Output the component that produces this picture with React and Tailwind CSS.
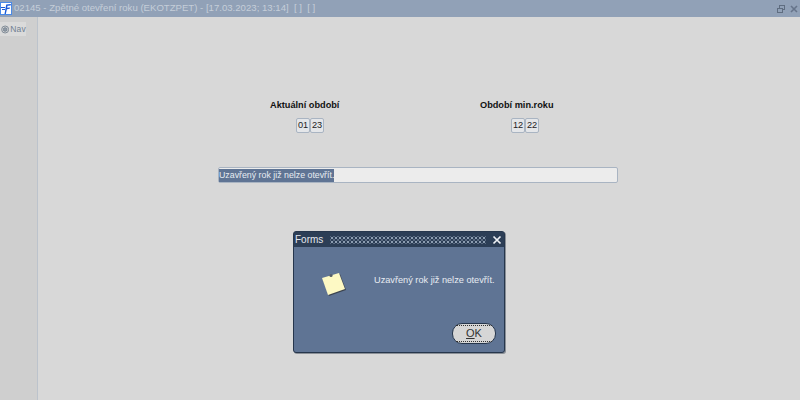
export default function App() {
  const Cell = ({ children }) => (
    <div className="w-[14px] h-[15px] flex items-center justify-center rounded-[2px] border border-[#a9b4c2] bg-[#e4e6e9] text-[9.2px] leading-none text-[#222]">
      {children}
    </div>
  );
  const Period = ({ label, a, b, width, cellsOffset }) => (
    <div className="flex flex-col items-start" style={{ width }}>
      <div className="h-[14px] leading-[14px] text-[9.2px] font-bold text-[#111]">{label}</div>
      <div className="flex mt-[6px]" style={{ marginLeft: cellsOffset }}>
        <Cell>{a}</Cell>
        <Cell>{b}</Cell>
      </div>
    </div>
  );
  return (
    <div className="relative w-[800px] h-[400px] overflow-hidden flex flex-col bg-[#d8d8d8] font-['Liberation_Sans',Arial,sans-serif]">
      <div className="h-[17px] shrink-0 flex items-center bg-[#91a1b7] text-[#c5ced9]">
        <div className="w-[12px] h-[13px] bg-white border border-[#4a8ae8] flex items-center justify-center">
          <svg width="10" height="11" viewBox="0 0 10 11">
            <path d="M3.5 11 L5.2 1.5 L10 1 L9.6 2.4 L6.5 2.8 L6.2 4.8 L9 4.4 L8.7 5.8 L5.9 6.2 L4.8 11 Z" fill="#1a5ad8" />
            <path d="M0 4.5 H4 M1 6.5 H4" stroke="#1a5ad8" strokeWidth="1" />
          </svg>
        </div>
        <div className="ml-[2px] text-[9.6px] whitespace-pre">02145 - Zpětné otevření roku (EKOTZPET) - [17.03.2023; 13:14]  [ ]  [ ]</div>
        <div className="ml-auto flex items-center gap-[3px] pr-[1px]">
          <svg width="10" height="10" viewBox="0 0 10 10" fill="none" stroke="#5f6d80" strokeWidth="1">
            <rect x="3.5" y="1.5" width="5" height="4" />
            <rect x="1.5" y="4.5" width="5" height="4" fill="#91a1b7" />
          </svg>
          <svg width="10" height="10" viewBox="0 0 10 10" fill="none" stroke="#66748a" strokeWidth="1.6">
            <path d="M2 2 L8 8 M8 2 L2 8" />
          </svg>
        </div>
      </div>
      <div className="flex-1 flex min-h-0">
        <div className="w-[38px] shrink-0 bg-[#cfcfcf] border-r border-[#bcc3cc] pt-[5px]">
          <div className="w-[26px] h-[14px] flex items-center gap-[1px] bg-[#dadada] pl-[1px]">
            <svg width="9" height="9" viewBox="0 0 9 9" fill="none" stroke="#76828f">
              <circle cx="4.5" cy="4.5" r="3.8" />
              <circle cx="4.5" cy="4.5" r="2" fill="#8f9aa6" />
            </svg>
            <span className="text-[8.5px] leading-none text-[#6f7f92] tracking-[0.2px]">Nav</span>
          </div>
        </div>
        <div className="flex-1 pt-[81px]">
          <div className="flex pl-[232px]">
            <Period label="Aktuální období" a="01" b="23" width={210} cellsOffset={26} />
            <Period label="Období min.roku" a="12" b="22" width={100} cellsOffset={31} />
          </div>
          <div className="ml-[180px] mt-[34px] w-[400px] h-[16px] flex items-center rounded-[2px] border border-[#a9b4c2] bg-[#ececec]">
            <span className="h-[13px] leading-[13px] text-[8.8px] bg-[#5f7494] text-[#e8ecf2]">Uzavřený rok již nelze otevřít.</span>
          </div>
        </div>
      </div>
      <div className="absolute left-[293px] top-[231px] w-[212px] h-[122px] flex flex-col rounded-[3px] border border-[#26364c] bg-[#5f7494] shadow-[1px_1px_0_#8a8f96]">
        <div className="h-[15px] shrink-0 flex items-center bg-[#2c3e56] text-[#e4e8ee]">
          <span className="ml-[1px] text-[10px] leading-none">Forms</span>
          <div className="ml-[7px] w-[156px] h-[8px] [background:radial-gradient(#8fa0b4_0.7px,transparent_0.9px)_0_0/4px_4px,radial-gradient(#5c6c82_0.7px,transparent_0.9px)_2px_2px/4px_4px]" />
          <svg className="ml-[6px]" width="10" height="10" viewBox="0 0 10 10" fill="none" stroke="#eef1f5" strokeWidth="1.7">
            <path d="M1.5 1.5 L8.5 8.5 M8.5 1.5 L1.5 8.5" />
          </svg>
        </div>
        <div className="relative flex-1">
          <div className="absolute left-[28px] top-[25px]">
            <svg width="26" height="26" viewBox="0 0 26 26">
              <polygon points="1,7 18,2 24,18 7,24" fill="#3c4450" />
              <polygon points="0,6 17,1 23,17 6,23" fill="#fdf9c4" />
              <circle cx="9" cy="3.5" r="1.6" fill="#555e6a" />
            </svg>
          </div>
          <div className="absolute left-[80px] top-[26px] text-[9.2px] leading-[14px] text-[#e8ecf2] whitespace-nowrap">Uzavřený rok již nelze otevřít.</div>
          <button className="absolute left-[158px] top-[76px] w-[44px] h-[21px] rounded-[10px] border border-[#26364c] bg-[#d6d6d6] text-[11px] text-[#333] flex items-center justify-center">
            <span className="leading-[15px] w-[36px] text-center border-y border-dotted border-[#333]"><u>O</u>K</span>
          </button>
        </div>
      </div>
    </div>
  );
}
